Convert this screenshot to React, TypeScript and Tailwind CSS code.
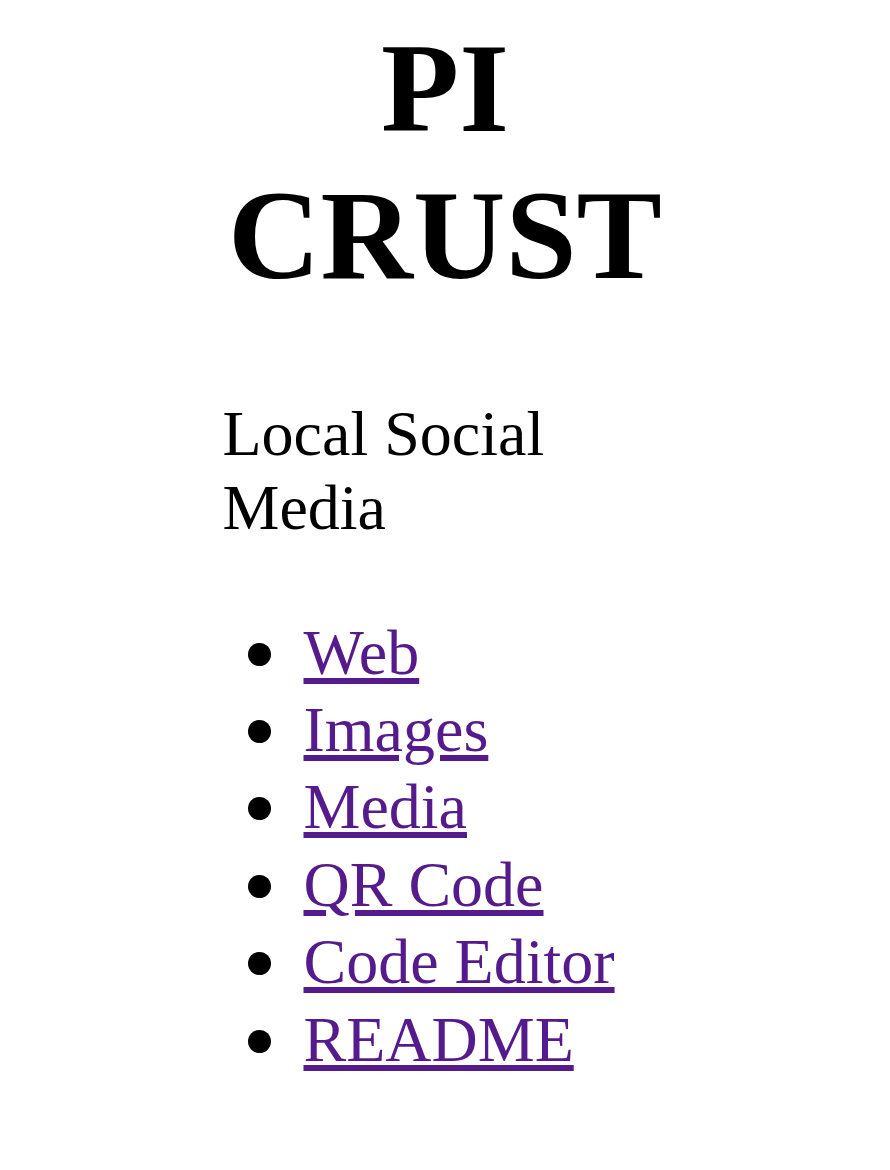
export default function App() {
  const links = ["Web", "Images", "Media", "QR Code", "Code Editor", "README"];
  return (
    <div className="min-h-screen bg-white text-black" style={{ fontFamily: '"Liberation Serif", "Times New Roman", serif' }}>
      <div className="mx-auto w-1/2 pt-[15px]">
        <h1 className="text-center text-[128px] font-bold leading-[1.15]">PI CRUST</h1>
        <p className="mt-[88px] text-[64px] leading-[1.15]">Local Social Media</p>
        <ul className="mt-[69px] pl-[25px] text-[64px] leading-[77.4px]">
          {links.map((l) => (
            <li key={l} className="flex items-start">
              <span className="mt-[29px] h-[23px] w-[23px] shrink-0 rounded-full bg-black" />
              <a href="#" className="ml-[33px] text-[#551A8B] underline">
                {l}
              </a>
            </li>
          ))}
        </ul>
      </div>
    </div>
  );
}
